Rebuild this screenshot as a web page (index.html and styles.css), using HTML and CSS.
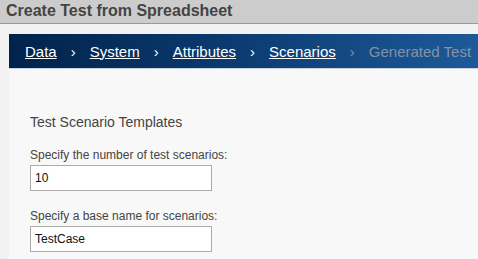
FILE: index.html
```html
<!DOCTYPE html>
<html lang="en">
<head>
    <meta charset="UTF-8">
    <meta name="viewport" content="width=device-width, initial-scale=1.0">
    <title>Create Test from Spreadsheet</title>
    <link rel="stylesheet" href="styles.css">
</head>
<body>
    <div class="title-bar">
        <h1>Create Test from Spreadsheet</h1>
    </div>

    <div class="wizard">
        <nav class="steps">
            <a href="#">Data</a>
            <span class="sep">&rsaquo;</span>
            <a href="#">System</a>
            <span class="sep">&rsaquo;</span>
            <a href="#">Attributes</a>
            <span class="sep">&rsaquo;</span>
            <a href="#">Scenarios</a>
            <span class="sep disabled">&rsaquo;</span>
            <span class="disabled">Generated Test</span>
        </nav>

        <div class="panel">
            <h2>Test Scenario Templates</h2>
            <div class="form-group">
                <label for="count">Specify the number of test scenarios:</label>
                <input type="text" id="count" value="10">
            </div>
            <div class="form-group">
                <label for="baseName">Specify a base name for scenarios:</label>
                <input type="text" id="baseName" value="TestCase">
            </div>
        </div>
    </div>
</body>
</html>
```

FILE: styles.css
```css
* {
    box-sizing: border-box;
}
body {
    margin: 0;
    font-family: "Liberation Sans", Arial, sans-serif;
    background: #f2f2f2;
    overflow: hidden;
}
.title-bar {
    height: 24px;
    background: #cccccc;
    border-bottom: 1px solid #9a9a9a;
    padding-left: 6px;

    h1 {
        margin: 0;
        font-size: 16px;
        line-height: 22px;
        color: #444;
    }
}
.wizard {
    margin: 10px 0 0 9px;
}
.steps {
    display: flex;
    align-items: center;
    height: 35px;
    padding-left: 16px;
    background: linear-gradient(to right, #00234a, #0c3c72 50%, #1d5a99);
    border-bottom: 1px solid #c9d3de;
    font-size: 15px;
    white-space: nowrap;

    a {
        color: #fff;
    }
    .sep {
        margin: 0 14px;
        color: #fff;
    }
    .disabled {
        color: #8392a6;
    }
}
.panel {
    height: 200px;
    background: #f8f8f8;
    padding: 45px 0 0 21px;

    h2 {
        margin: 0 0 18px;
        font-size: 14px;
        line-height: 16px;
        font-weight: normal;
        color: #444;
    }
}
.form-group {
    margin-bottom: 18px;

    label {
        display: block;
        margin-bottom: 3px;
        font-size: 12px;
        line-height: 14px;
        color: #444;
    }
    input {
        display: block;
        width: 182px;
        height: 26px;
        padding: 0 4px;
        border: 1px solid #ababab;
        background: #fff;
        font-family: inherit;
        font-size: 12px;
        color: #111;
    }
}
```
